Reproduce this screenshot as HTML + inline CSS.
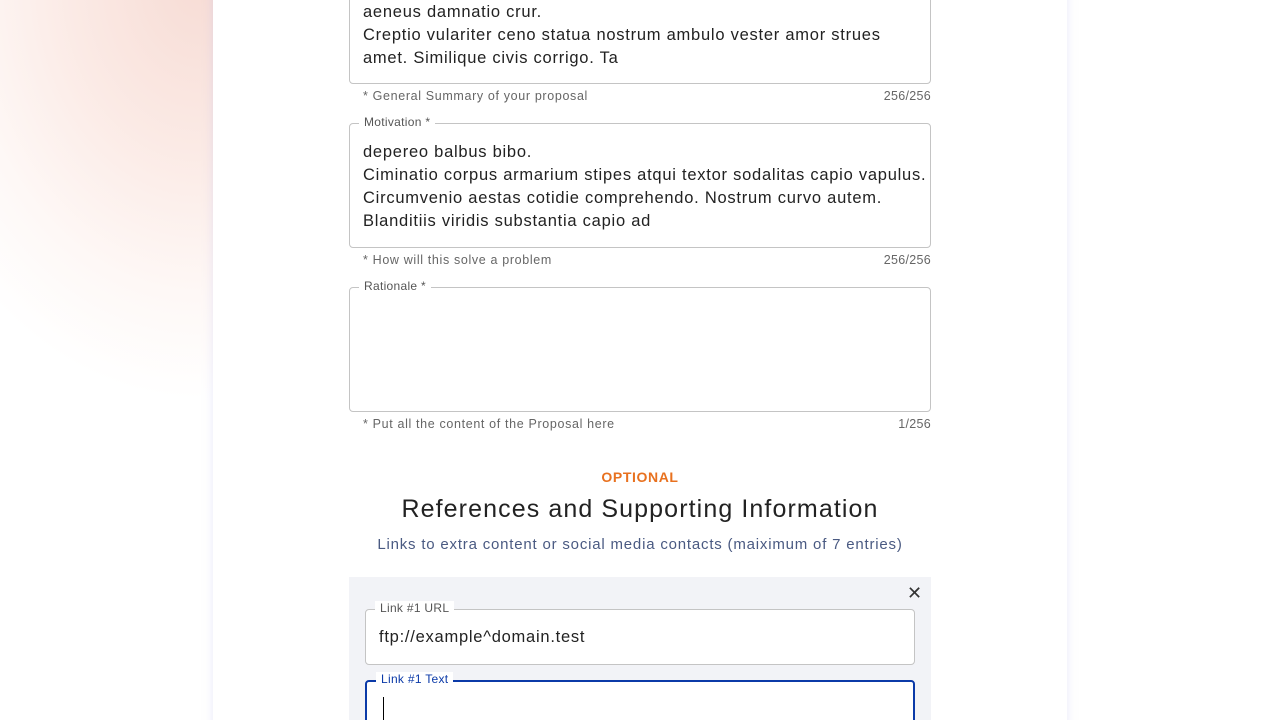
<!DOCTYPE html>
<html><head><style>
html,body{margin:0;width:1280px;height:720px;overflow:hidden;}
body{position:relative;background:#fff;font-family:"Liberation Sans",sans-serif;}
.bg{position:absolute;left:0;top:0;width:213px;height:420px;background:radial-gradient(ellipse 320px 420px at 200px -20px,#f7dcd5 0%,#fbeae5 40%,#fef8f6 75%,#fff 100%);}
.card{position:absolute;left:213px;top:-20px;width:854px;height:760px;background:#fff;box-shadow:0 0 10px rgba(170,170,235,.25);}
.f{position:absolute;left:349px;width:580px;border:1px solid #c4c4c4;border-radius:4px;background:#fff;}
.lab{position:absolute;top:-9px;left:9px;background:#fff;padding:0 5px;font-size:12px;color:#555;letter-spacing:.3px;}
.t{position:absolute;left:13px;font-size:16.5px;line-height:23px;color:#222;white-space:nowrap;letter-spacing:.75px;}
.h{position:absolute;font-size:12.5px;color:#666;letter-spacing:.65px;}
.r{position:absolute;font-size:12.5px;color:#666;right:349px;letter-spacing:.3px;}
</style></head><body>
<div class="bg"></div>
<div class="card"></div>
<div class="f" style="top:-10px;height:92px"><div class="t" style="top:10px">aeneus damnatio crur.<br>Creptio vulariter ceno statua nostrum ambulo vester amor strues<br>amet. Similique civis corrigo. Ta</div></div>
<div class="h" style="left:363px;top:89px">* General Summary of your proposal</div><div class="r" style="top:89px">256/256</div>
<div class="f" style="top:123px;height:123px"><div class="lab">Motivation *</div><div class="t" style="top:17px">depereo balbus bibo.<br>Ciminatio corpus armarium stipes atqui textor sodalitas capio vapulus.<br>Circumvenio aestas cotidie comprehendo. Nostrum curvo autem.<br>Blanditiis viridis substantia capio ad</div></div>
<div class="h" style="left:363px;top:253px">* How will this solve a problem</div><div class="r" style="top:253px">256/256</div>
<div class="f" style="top:287px;height:123px"><div class="lab">Rationale *</div></div>
<div class="h" style="left:363px;top:417px">* Put all the content of the Proposal here</div><div class="r" style="top:417px">1/256</div>
<div style="position:absolute;left:0;width:1280px;top:469px;text-align:center;font-size:14px;color:#e8711f;font-weight:bold;letter-spacing:.6px">OPTIONAL</div>
<div style="position:absolute;left:0;width:1280px;top:495px;text-align:center;font-size:25px;color:#222;letter-spacing:1.1px">References and Supporting Information</div>
<div style="position:absolute;left:0;width:1280px;top:536px;text-align:center;font-size:15px;color:#4a5a82;letter-spacing:.8px">Links to extra content or social media contacts (maiximum of 7 entries)</div>
<div style="position:absolute;left:349px;top:577px;width:582px;height:160px;background:#f2f3f7"></div>
<div style="position:absolute;left:907px;top:583px;font-size:18px;color:#333">✕</div>
<div class="f" style="left:365px;top:609px;width:548px;height:54px"><div class="lab" style="background:#fff">Link #1 URL</div><div class="t" style="top:16px">ftp://example^domain.test</div></div>
<div class="f" style="left:365px;top:680px;width:546px;height:60px;border:2px solid #0b3aa8"><div class="lab" style="color:#0b3aa8;top:-10px">Link #1 Text</div><div style="position:absolute;left:16px;top:15px;width:1px;height:26px;background:#000"></div></div>
</body></html>
